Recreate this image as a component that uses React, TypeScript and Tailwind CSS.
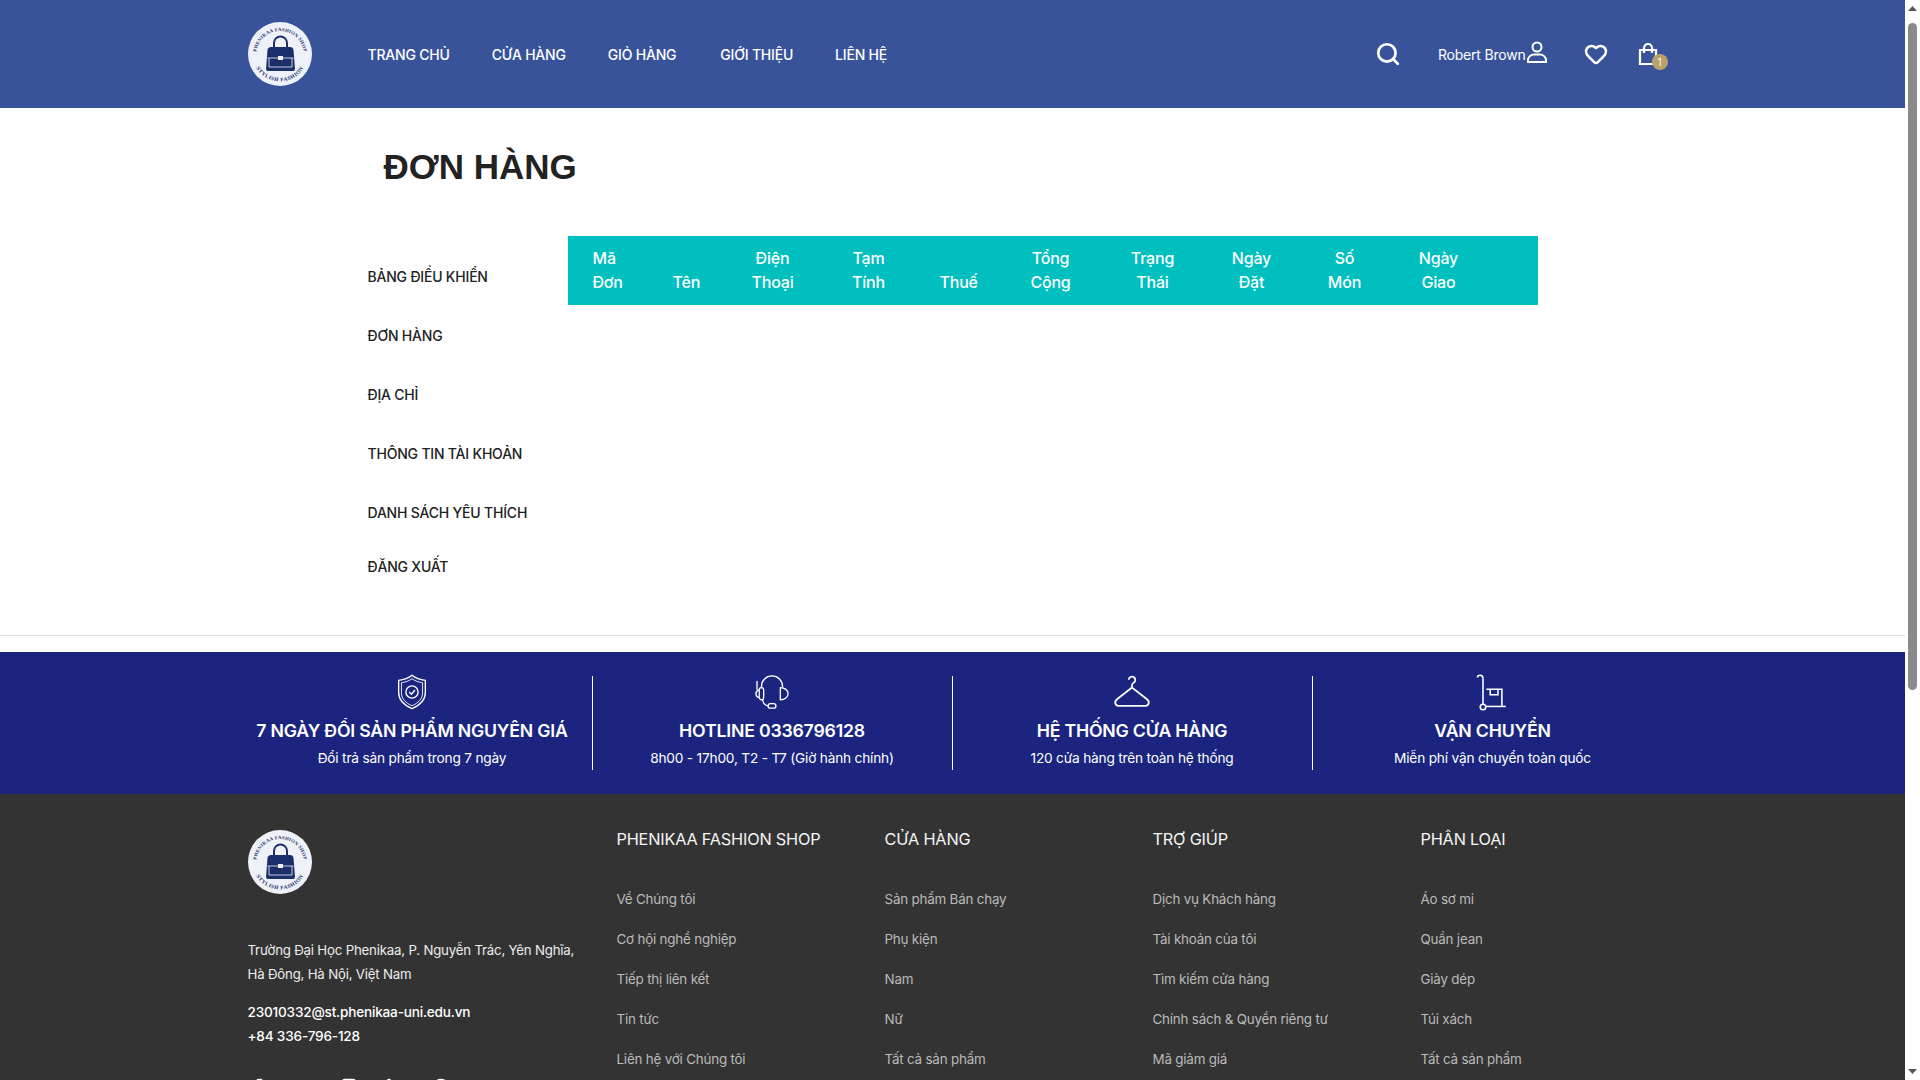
import { Search, Heart, Facebook, Instagram, Twitter, Linkedin, Dribbble } from 'lucide-react'

const navItems = [
  { label: 'TRANG CHỦ', cls: '' },
  { label: 'CỬA HÀNG', cls: '' },
  { label: 'GIỎ HÀNG', cls: 'mr-[2px]' },
  { label: 'GIỚI THIỆU', cls: '' },
  { label: 'LIÊN HỆ', cls: '' },
]
const sideItems = ['BẢNG ĐIỀU KHIỂN', 'ĐƠN HÀNG', 'ĐỊA CHỈ', 'THÔNG TIN TÀI KHOẢN', 'DANH SÁCH YÊU THÍCH']
const columns = [
  { label: 'Mã Đơn', cls: 'w-[80px] text-left' },
  { label: 'Tên', cls: 'w-[75px] text-center' },
  { label: 'Điện Thoại', cls: 'w-[100px] text-center' },
  { label: 'Tạm Tính', cls: 'w-[92px] text-center' },
  { label: 'Thuế', cls: 'w-[86px] text-center' },
  { label: 'Tổng Cộng', cls: 'w-[100px] text-center' },
  { label: 'Trạng Thái', cls: 'w-[104px] text-center' },
  { label: 'Ngày Đặt', cls: 'w-[94px] text-center' },
  { label: 'Số Món', cls: 'w-[92px] text-center' },
  { label: 'Ngày Giao', cls: 'w-[96px] text-center' },
]

const footerCols = [
  { title: 'PHENIKAA FASHION SHOP', links: ['Về Chúng tôi', 'Cơ hội nghề nghiệp', 'Tiếp thị liên kết', 'Tin tức', 'Liên hệ với Chúng tôi'] },
  { title: 'CỬA HÀNG', links: ['Sản phẩm Bán chạy', 'Phụ kiện', 'Nam', 'Nữ', 'Tất cả sản phẩm'] },
  { title: 'TRỢ GIÚP', links: ['Dịch vụ Khách hàng', 'Tài khoản của tôi', 'Tìm kiếm cửa hàng', 'Chính sách & Quyền riêng tư', 'Mã giảm giá'] },
  { title: 'PHÂN LOẠI', links: ['Áo sơ mi', 'Quần jean', 'Giày dép', 'Túi xách', 'Tất cả sản phẩm'] },
]

function Logo({ id }: { id: string }) {
  return (
    <svg width="64" height="64" viewBox="0 0 64 64" className="shrink-0">
      <defs>
        <path id={`${id}-top`} d="M9 39.900 A24 24 0 1 1 55 39.900" />
        <path id={`${id}-bottom`} d="M6.200 41.400 A27.500 27.500 0 0 0 57.800 41.400" />
      </defs>
      <circle cx="32" cy="32" r="32" fill="#eef1f8" />
      <text fill="#1b2f6b" fontSize="4.800" fontWeight="700" fontFamily="Liberation Serif, serif" letterSpacing="0.3">
        <textPath href={`#${id}-top`} startOffset="50%" textAnchor="middle">PHENIKAA FASHION SHOP</textPath>
      </text>
      <text fill="#1b2f6b" fontSize="5.400" fontWeight="700" fontFamily="Liberation Serif, serif" letterSpacing="0.5">
        <textPath href={`#${id}-bottom`} startOffset="50%" textAnchor="middle">STYLISH FASHION</textPath>
      </text>
      <path d="M26 27v-6a6.500 6.500 0 0 1 13 0v6" fill="none" stroke="#1b2f6b" strokeWidth="2" />
      <path d="M23 25h19q3 0 3.500 3l1.500 19q0 2-2 2H20q-2 0-2-2l1.500-19q.5-3 3.500-3z" fill="#1b2f6b" />
      <path d="M19.500 36h26M21 45h23M21 36v9M44 36v9" stroke="#eef1f8" strokeWidth="0.800" fill="none" />
      <rect x="30" y="34" width="5" height="4" fill="#eef1f8" />
    </svg>
  )
}

function UserIcon() {
  return (
    <svg width="22" height="22" viewBox="0 0 22 22" fill="none" stroke="white" strokeWidth="2" className="-translate-y-[2px]">
      <circle cx="11" cy="6" r="4.500" />
      <path d="M2 21v-2c0-3 3-5.500 6-5.500h6c3 0 6 2.500 6 5.500v2z" />
    </svg>
  )
}

function BagIcon() {
  return (
    <svg width="20" height="22" viewBox="0 0 20 22" fill="none" stroke="white" strokeWidth="2.200">
      <path d="M2 7h16v14H2z" />
      <path d="M6 10V5a4 4 0 0 1 8 0v5" />
    </svg>
  )
}

function ShieldIcon() {
  return (
    <svg width="40" height="40" viewBox="0 0 36 36" fill="none" stroke="white" strokeWidth="1.200">
      <path d="M18 3c3 2.500 7 4 12 4.500v11c0 7-5 11.500-12 14.500-7-3-12-7.500-12-14.500v-11c5-.5 9-2 12-4.500z" />
      <path d="M18 6c2.500 2 6 3.200 9.500 3.700v9c0 5.500-4 9.300-9.500 11.700-5.500-2.400-9.500-6.200-9.500-11.700v-9C12 9.200 15.500 8 18 6z" strokeWidth="0.800" />
      <circle cx="18" cy="18" r="5.500" />
      <path d="M15.500 18l2 2 3.200-3.800" />
    </svg>
  )
}

function HeadsetIcon() {
  return (
    <svg width="40" height="40" viewBox="0 0 36 36" fill="none" stroke="white" strokeWidth="1.200">
      <path d="M8.500 14v-1a9.500 9.500 0 0 1 19 0v1" />
      <rect x="6.500" y="14" width="4" height="11" rx="2" />
      <path d="M25.500 14c4 0 7 2.500 7 5.500s-3 5.500-7 5.500z" />
      <path d="M6.500 16c-2 .5-3 2-3 3.500s1 3 3 3.500" />
      <path d="M4.500 8v8" />
      <path d="M9.500 25c.5 3.500 2.500 5 5 5.500" />
      <rect x="14.500" y="28.500" width="7" height="4" rx="2" />
    </svg>
  )
}

function HangerIcon() {
  return (
    <svg width="40" height="40" viewBox="0 0 36 36" fill="none" stroke="white" strokeWidth="1.600">
      <path d="M15 7a3 3 0 1 1 4.500 2.700c-1 .6-1.500 1.300-1.500 2.300v2" />
      <path d="M18 14L4.500 24.500C1.500 27 3 30.500 6 30.500H30C33 30.500 34.500 27 31.500 24.500z" />
    </svg>
  )
}

function CartIcon() {
  return (
    <svg width="40" height="40" viewBox="0 0 36 36" fill="none" stroke="white" strokeWidth="1.400">
      <path d="M9 6c0-2-1-3-2.500-3S4 4 4 5" />
      <path d="M9 6v23" />
      <circle cx="9" cy="31.500" r="2.500" />
      <path d="M11.500 31h18" />
      <path d="M12 15.500h14V31" />
      <path d="M15.500 15.500v5h7v-5" />
    </svg>
  )
}

const perks = [
  { icon: <ShieldIcon />, title: '7 NGÀY ĐỔI SẢN PHẨM NGUYÊN GIÁ', sub: 'Đổi trả sản phẩm trong 7 ngày' },
  { icon: <HeadsetIcon />, title: 'HOTLINE 0336796128', sub: '8h00 - 17h00, T2 - T7 (Giờ hành chính)' },
  { icon: <HangerIcon />, title: 'HỆ THỐNG CỬA HÀNG', sub: '120 cửa hàng trên toàn hệ thống' },
  { icon: <CartIcon />, title: 'VẬN CHUYỂN', sub: 'Miễn phí vận chuyển toàn quốc' },
]

// the reference shows the browser's scrollbar, headless chrome hides real ones
function ScrollStrip() {
  return (
    <div className="w-[15px] shrink-0 bg-white flex flex-col items-center">
      <svg width="9" height="5" viewBox="0 0 9 5" className="mt-[6px]"><path d="M4.500 0L9 5H0z" fill="#555" /></svg>
      <div className="w-[9px] h-[667px] mt-[12px] rounded-full bg-[#8a8a8a]" />
      <svg width="9" height="5" viewBox="0 0 9 5" className="mt-auto mb-[6px]"><path d="M4.500 5L9 0H0z" fill="#555" /></svg>
    </div>
  )
}

export default function App() {
  return (
    <div className="h-screen flex overflow-hidden font-['Inter',sans-serif] tracking-[-0.2px] bg-white text-[#222]">
      <div className="w-[1905px] shrink-0">
        <header className="bg-[#39539b] h-[108px]">
          <div className="w-[1440px] mx-auto px-[15px] h-full flex items-center text-white">
            <Logo id="logo-head" />
            <nav className="flex gap-[42px] ml-[56px] text-[14px] font-medium">
              {navItems.map((n) => (
                <a key={n.label} href="#" className={n.cls}>{n.label}</a>
              ))}
            </nav>
            <div className="ml-auto flex items-center">
              <Search size={26} strokeWidth={2.500} />
              <span className="ml-[37px] text-[14px]">Robert Brown</span>
              <UserIcon />
              <Heart size={24} strokeWidth={2.500} className="ml-[36px]" />
              <div className="relative ml-[30px]">
                <BagIcon />
                <span className="absolute left-[14px] top-[11px] w-[16px] h-[16px] rounded-full bg-[#b9a16b] text-[10px] flex items-center justify-center">1</span>
              </div>
            </div>
          </div>
        </header>

        <main className="w-[1170px] mx-auto">
          <h1 className="pl-[16px] pt-[36px] font-['Liberation_Sans',sans-serif] font-bold text-[35px] leading-[45px] tracking-normal text-[#222]">ĐƠN HÀNG</h1>
          <div className="flex mt-[47px]">
            <aside className="w-[200px] shrink-0 text-[14px] font-medium text-[#222] pt-[31px]">
              <ul className="flex flex-col gap-[39px]">
                {sideItems.map((s) => (
                  <li key={s} className="leading-[20px] whitespace-nowrap">{s}</li>
                ))}
                <li className="leading-[20px] -mt-[5px]">ĐĂNG XUẤT</li>
              </ul>
            </aside>
            <div className="w-[970px]">
              <table className="w-full table-fixed bg-[#00bfbf] text-white">
                <thead>
                  <tr>
                    {columns.map((c) => (
                      <th key={c.label} className={`px-[25px] pt-[10px] pb-[11px] align-bottom text-[16px] leading-[24px] font-medium ${c.cls}`}>{c.label}</th>
                    ))}
                    <th />
                  </tr>
                </thead>
              </table>
            </div>
          </div>
        </main>

        <hr className="mt-[58px] border-t border-[#ddd]" />

        <section className="mt-[16px] bg-[#1b2580] h-[142px] text-white">
          <div className="w-[1440px] mx-auto grid grid-cols-4 pt-[24px]">
            {perks.map((p, i) => (
              <div key={p.title} className={`h-[94px] flex flex-col items-center ${i < 3 ? 'border-r border-white' : ''}`}>
                <div className="-mt-[4px]">{p.icon}</div>
                <h3 className="mt-[7px] text-[17.700px] leading-[24px] font-semibold whitespace-nowrap">{p.title}</h3>
                <p className="mt-[5px] text-[13.700px] leading-[20px]">{p.sub}</p>
              </div>
            ))}
          </div>
        </section>

        <footer className="bg-[#333] text-white h-[900px]">
          <div className="w-[1440px] mx-auto px-[15px] pt-[35px] flex">
            <div className="w-[369px] shrink-0 text-[13.250px]">
              <div className="mt-[1px]"><Logo id="logo-foot" /></div>
              <p className="mt-[44px] leading-[24px] text-[#eee]">Trường Đại Học Phenikaa, P. Nguyễn Trác, Yên Nghĩa,<br />Hà Đông, Hà Nội, Việt Nam</p>
              <p className="mt-[14px] leading-[24px] font-medium text-[13.600px]">23010332@st.phenikaa-uni.edu.vn<br />+84 336-796-128</p>
              <div className="flex gap-[28px] mt-[30px]">
                <Facebook size={18} />
                <Twitter size={18} />
                <Instagram size={18} />
                <Linkedin size={18} />
                <Dribbble size={18} />
              </div>
            </div>
            {footerCols.map((col) => (
              <div key={col.title} className="w-[268px] shrink-0">
                <h4 className="text-[16.300px] leading-[20px] text-[#f5f5f5] whitespace-nowrap">{col.title}</h4>
                <ul className="mt-[40px] flex flex-col gap-[20px] text-[13.400px] leading-[20px] text-[#bbb]">
                  {col.links.map((l) => (
                    <li key={l} className="whitespace-nowrap">{l}</li>
                  ))}
                </ul>
              </div>
            ))}
          </div>
        </footer>
      </div>
      <ScrollStrip />
    </div>
  )
}
